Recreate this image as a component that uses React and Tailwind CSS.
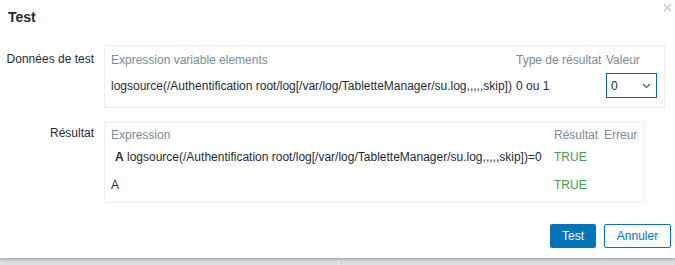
export default function App() {
  const font = { fontFamily: '"Liberation Sans", Arial, sans-serif' };
  return (
    <div className="w-[675px] h-[265px] bg-[#dde0e2] flex flex-col overflow-hidden text-[12px] text-[#1f2c33]" style={font}>
      <div className="bg-white h-[258px] flex flex-col shadow-[0_1px_3px_rgba(0,0,0,0.25)] relative z-10">
        <div className="flex items-start justify-between h-[45px]">
          <div className="pl-[8px] pt-[7px] text-[14px] font-bold text-[#1f2c33]">Test</div>
          <svg width="9" height="9" viewBox="0 0 9 9" className="mt-[3px] mr-[3px]">
            <path d="M1 1 L8 8 M8 1 L1 8" stroke="#c4cbcf" strokeWidth="1.6" />
          </svg>
        </div>

        <div className="flex">
          <div className="w-[94px] text-right pt-[5px]">Données de test</div>
          <div className="ml-[10px] w-[561px] border border-[#ebeef0] pl-[6px] pr-[6px] pt-[5px] pb-[9px]">
            <div className="grid grid-cols-[405px_90px_51px] text-[#768d99] h-[18px] items-center">
              <div>Expression variable elements</div>
              <div>Type de résultat</div>
              <div>Valeur</div>
            </div>
            <div className="grid grid-cols-[405px_90px_51px] items-center mt-[4px]">
              <div className="whitespace-nowrap">logsource(/Authentification root/log[/var/log/TabletteManager/su.log,,,,,skip])</div>
              <div>0 ou 1</div>
              <div className="h-[25px] border border-[#0b6aa6] flex items-center justify-between pl-[4px] pr-[5px]">
                <span>0</span>
                <svg width="9" height="6" viewBox="0 0 9 6">
                  <path d="M1 1 L4.5 4.5 L8 1" fill="none" stroke="#4a5a62" strokeWidth="1.2" />
                </svg>
              </div>
            </div>
          </div>
        </div>

        <div className="flex mt-[14px]">
          <div className="w-[94px] text-right pt-[2px]">Résultat</div>
          <div className="ml-[10px] border border-[#ebeef0] pl-[6px] pr-[6px] pt-[3px] pb-[8px]">
            <div className="grid grid-cols-[443px_50px_34px] text-[#768d99] h-[18px] items-center">
              <div>Expression</div>
              <div>Résultat</div>
              <div>Erreur</div>
            </div>
            <div className="grid grid-cols-[443px_50px_34px] items-center mt-[4px] h-[18px]">
              <div className="whitespace-nowrap pl-[4px]"><span className="font-bold">A</span> logsource(/Authentification root/log[/var/log/TabletteManager/su.log,,,,,skip])=0</div>
              <div className="text-[#429e47]">TRUE</div>
              <div></div>
            </div>
            <div className="grid grid-cols-[443px_50px_34px] items-center mt-[10px] h-[18px]">
              <div>A</div>
              <div className="text-[#429e47]">TRUE</div>
              <div></div>
            </div>
          </div>
        </div>

        <div className="flex justify-end gap-[8px] mt-[21px] pr-[4px]">
          <button className="h-[24px] w-[46px] bg-[#0275b8] text-white rounded-[2px] text-[12px]">Test</button>
          <button className="h-[24px] w-[67px] bg-white border border-[#0275b8] text-[#0275b8] rounded-[2px] text-[12px]">Annuler</button>
        </div>
      </div>
      <div className="flex-1 flex bg-gradient-to-b from-[#cfd4d7] to-[#dfe2e4]">
        <div className="w-[339px] border-r border-[#e8eaeb]"></div>
      </div>
    </div>
  );
}
